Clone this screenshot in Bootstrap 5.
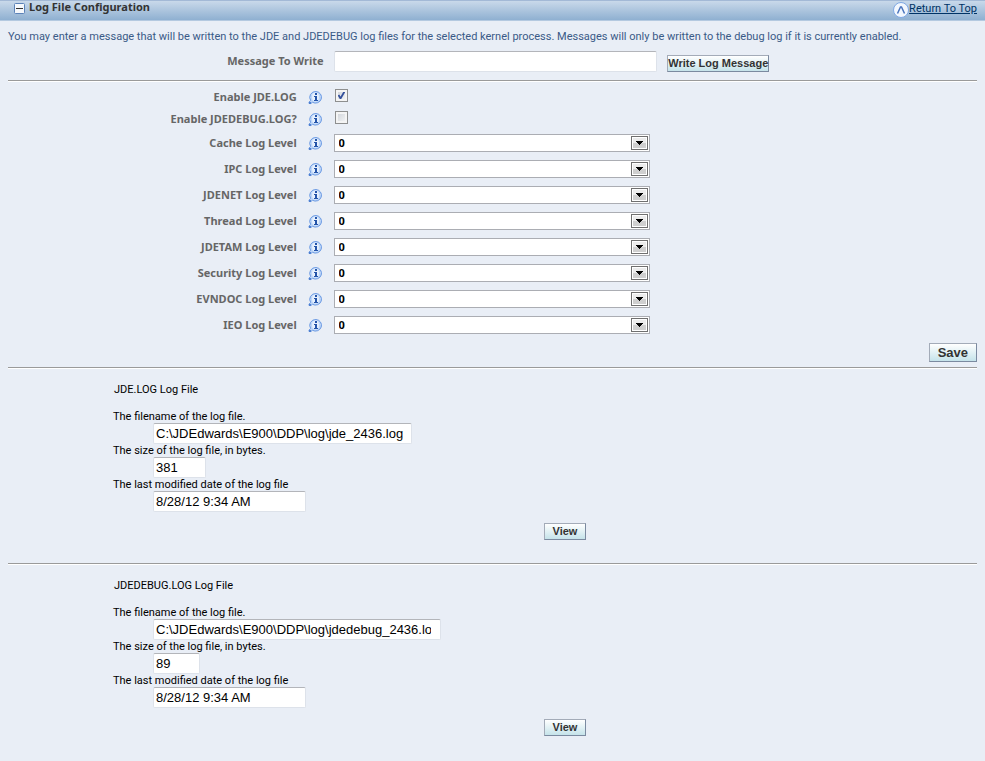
<!DOCTYPE html>
<html lang="en">
<head>
<meta charset="utf-8">
<meta name="viewport" content="width=device-width, initial-scale=1">
<title>Log File Configuration</title>
<link href="https://cdn.jsdelivr.net/npm/bootstrap@5.3.0/dist/css/bootstrap.min.css" rel="stylesheet">
<style>
body { background: #e9eef6; color: #000; font: 11px/14px Tahoma, Roboto, sans-serif; }
.title-bar { height: 21px; padding: 0 8px 0 14px; background: linear-gradient(#c9d9ea, #8fb0d1); border-top: 1px solid #a3b9d6; border-bottom: 1px solid #b4c9e0; }
.title-bar h1 { font: bold 11px/12px Tahoma, "Noto Sans", sans-serif; color: #333; margin: 0; }
.title-bar a { color: #003366; font-size: 11px; line-height: 16px; }
.toggle-btn { width: 11px; height: 11px; margin-top: 2px; }
.page { padding: 8px; }
.intro { color: #3a5a87; line-height: 15px; margin: 0 0 2px; }
.rule { height: 2px; margin: 0; border: 0; border-top: 1px solid #9a9a9a; border-bottom: 1px solid #fff; opacity: 1; }
.caption-cell { width: 33.6%; flex: none; padding-right: 11px; color: #666; font: bold 11px/14px Tahoma, "Noto Sans", sans-serif; text-align: right; }
.caption-cell svg { margin-left: 8px; }
.message-cell { padding-right: 10px; }
.message-row { height: 30px; }
.text-box { border: 1px solid #dde2ea; border-top-color: #b3b5ba; background: #fff; color: #000; border-radius: 2px; height: 21px; padding: 0 2px; font: 13px "Liberation Sans", Arial, sans-serif; display: block; }
.message-box { width: 33.4%; }
.push { border: 1px solid #7b8aa0; border-top-color: #a3abb8; border-left-color: #a3abb8; border-radius: 0; background: linear-gradient(#fff, #c5e3ea); color: #333; font: bold 11px/15px "Liberation Sans", Arial, sans-serif; padding: 0 8px; }
.push-tight { padding: 0; margin-left: 10px; margin-top: 4px; }
.push-save { font-size: 13px; line-height: 17px; }
.settings { padding: 4px 0 5px; }
.check-row { height: 22px; }
.level-row { height: 26px; }
.tick { appearance: none; width: 13px; height: 13px; margin: 0 0 4px 1px; display: block; border: 1px solid #8e8f8f; background: linear-gradient(135deg, #ccd0d6, #f7f8f9); box-shadow: inset 0 0 0 2px #f4f4f4; }
.tick:checked { background: url("data:image/svg+xml,%3Csvg xmlns='http://www.w3.org/2000/svg' viewBox='0 0 11 11'%3E%3Cpath d='M2.5 5l2 3.5L8.5 1.5' fill='none' stroke='%2334509b' stroke-width='1.8'/%3E%3C/svg%3E"), linear-gradient(135deg, #ccd0d6, #f7f8f9); }
.level { appearance: none; width: 32.7%; height: 18px; border: 1px solid #abadb3; border-radius: 0; padding: 0 20px 0 4px; color: #000; font: bold 11px/14px Tahoma, "Noto Sans", sans-serif; background: #fff url("data:image/svg+xml,%3Csvg xmlns='http://www.w3.org/2000/svg' width='17' height='14' shape-rendering='crispEdges'%3E%3Cpath fill='%23707070' d='M0 0h17v14H0z'/%3E%3Cpath fill='%23fff' d='M1 1h15v12H1z'/%3E%3Cpath fill='%23ececec' d='M2 2h13v5H2z'/%3E%3Cpath fill='%23cfcfcf' d='M2 7h13v5H2z'/%3E%3Cpath fill='%23000' d='M5 5h7v1h-1v1h-1v1H9v1H8V8H7V7H6V6H5z'/%3E%3C/svg%3E") right 1px center no-repeat; }
.save-row { padding-bottom: 5px; }
.file-block { padding: 14px 0 23px 105px; }
.file-block h2 { font-size: 11px; line-height: 14px; font-weight: 400; margin: 0 0 13px 1px; }
.file-block label { display: block; line-height: 13px; }
.file-fields .text-box { margin-left: 40px; }
.file-actions { padding: 11px 0 0 40px; }
.w-name { width: 259px; } .w-name-long { width: 288px; padding-right: 9px !important; } .w-size { width: 53px; } .w-size-short { width: 47px; } .w-date { width: 153px; }
</style>
<script src="https://cdn.jsdelivr.net/npm/bootstrap@5.3.0/dist/js/bootstrap.bundle.min.js"></script>
</head>
<body>
<svg class="d-none" xmlns="http://www.w3.org/2000/svg">
  <symbol id="info" viewBox="0 0 15 14">
    <path d="M8 .5a6 5.800 0 1 1-3.500 10.800L2.800 12.500H1V11l1.700-1.500A6 5.800 0 0 1 8 .5z" fill="#bdd6f8" stroke="#6c9ae3"/>
    <path d="M1 11h2v2H1z" fill="#4f80d0"/>
    <ellipse cx="7.500" cy="6" rx="3.500" ry="4.500" fill="#e6f0fd"/>
    <path d="M7 2h2v2H7zM6 5h3v4h1v1H6V9h1V6H6z" fill="#2353a8"/>
  </symbol>
</svg>
<header class="title-bar d-flex justify-content-between">
  <div class="d-flex">
    <button type="button" class="toggle-btn btn p-0 border-0 d-flex" aria-label="Collapse section">
      <svg width="11" height="11" viewBox="0 0 11 11"><rect x=".5" y=".5" width="10" height="10" rx="1" fill="#f5f8fc" stroke="#5b82b8"/><path d="M2 5.500h7" stroke="#333"/></svg>
    </button>
    <h1 class="ms-1">Log File Configuration</h1>
  </div>
  <a href="#" class="d-flex"><svg width="16" height="17" viewBox="0 0 16 17"><circle cx="8" cy="9" r="7.500" fill="#f2f7fe" stroke="#7fa8e4"/><path d="M4.500 12.500l3-6.500h1l3 6.500" fill="none" stroke="#4a74bd" stroke-width="1.500"/></svg>Return To Top</a>
</header>
<main class="page">
  <p class="intro">You may enter a message that will be written to the JDE and JDEDEBUG log files for the selected kernel process. Messages will only be written to the debug log if it is currently enabled.</p>
  <form>
    <div class="message-row d-flex align-items-center mb-1">
      <label class="caption-cell message-cell" for="msg">Message To Write</label>
      <input id="msg" class="text-box message-box" type="text">
      <button type="button" class="push push-tight">Write Log Message</button>
    </div>
    <hr class="rule">
    <div class="settings">
      <div class="check-row d-flex align-items-center"><label class="caption-cell" for="c1">Enable JDE.LOG <svg width="15" height="14"><use href="#info"/></svg></label><input id="c1" class="tick" type="checkbox" checked></div>
      <div class="check-row d-flex align-items-center"><label class="caption-cell" for="c2">Enable JDEDEBUG.LOG? <svg width="15" height="14"><use href="#info"/></svg></label><input id="c2" class="tick" type="checkbox"></div>
      <div class="level-row d-flex align-items-center"><label class="caption-cell" for="l1">Cache Log Level <svg width="15" height="14"><use href="#info"/></svg></label><select id="l1" class="level"><option>0</option></select></div>
      <div class="level-row d-flex align-items-center"><label class="caption-cell" for="l2">IPC Log Level <svg width="15" height="14"><use href="#info"/></svg></label><select id="l2" class="level"><option>0</option></select></div>
      <div class="level-row d-flex align-items-center"><label class="caption-cell" for="l3">JDENET Log Level <svg width="15" height="14"><use href="#info"/></svg></label><select id="l3" class="level"><option>0</option></select></div>
      <div class="level-row d-flex align-items-center"><label class="caption-cell" for="l4">Thread Log Level <svg width="15" height="14"><use href="#info"/></svg></label><select id="l4" class="level"><option>0</option></select></div>
      <div class="level-row d-flex align-items-center"><label class="caption-cell" for="l5">JDETAM Log Level <svg width="15" height="14"><use href="#info"/></svg></label><select id="l5" class="level"><option>0</option></select></div>
      <div class="level-row d-flex align-items-center"><label class="caption-cell" for="l6">Security Log Level <svg width="15" height="14"><use href="#info"/></svg></label><select id="l6" class="level"><option>0</option></select></div>
      <div class="level-row d-flex align-items-center"><label class="caption-cell" for="l7">EVNDOC Log Level <svg width="15" height="14"><use href="#info"/></svg></label><select id="l7" class="level"><option>0</option></select></div>
      <div class="level-row d-flex align-items-center"><label class="caption-cell" for="l8">IEO Log Level <svg width="15" height="14"><use href="#info"/></svg></label><select id="l8" class="level"><option>0</option></select></div>
    </div>
    <div class="save-row d-flex justify-content-end"><button type="button" class="push push-save">Save</button></div>
    <hr class="rule">
  </form>
  <section class="file-block">
    <h2>JDE.LOG Log File</h2>
    <div class="file-fields">
      <label for="n1">The filename of the log file.</label><input id="n1" class="text-box w-name" value="C:\JDEdwards\E900\DDP\log\jde_2436.log">
      <label for="s1">The size of the log file, in bytes.</label><input id="s1" class="text-box w-size" value="381">
      <label for="d1">The last modified date of the log file</label><input id="d1" class="text-box w-date" value="8/28/12 9:34 AM">
    </div>
    <div class="file-actions text-center"><button type="button" class="push">View</button></div>
  </section>
  <hr class="rule">
  <section class="file-block pb-0">
    <h2>JDEDEBUG.LOG Log File</h2>
    <div class="file-fields">
      <label for="n2">The filename of the log file.</label><input id="n2" class="text-box w-name-long" value="C:\JDEdwards\E900\DDP\log\jdedebug_2436.log">
      <label for="s2">The size of the log file, in bytes.</label><input id="s2" class="text-box w-size-short" value="89">
      <label for="d2">The last modified date of the log file</label><input id="d2" class="text-box w-date" value="8/28/12 9:34 AM">
    </div>
    <div class="file-actions text-center"><button type="button" class="push">View</button></div>
  </section>
</main>
</body>
</html>
